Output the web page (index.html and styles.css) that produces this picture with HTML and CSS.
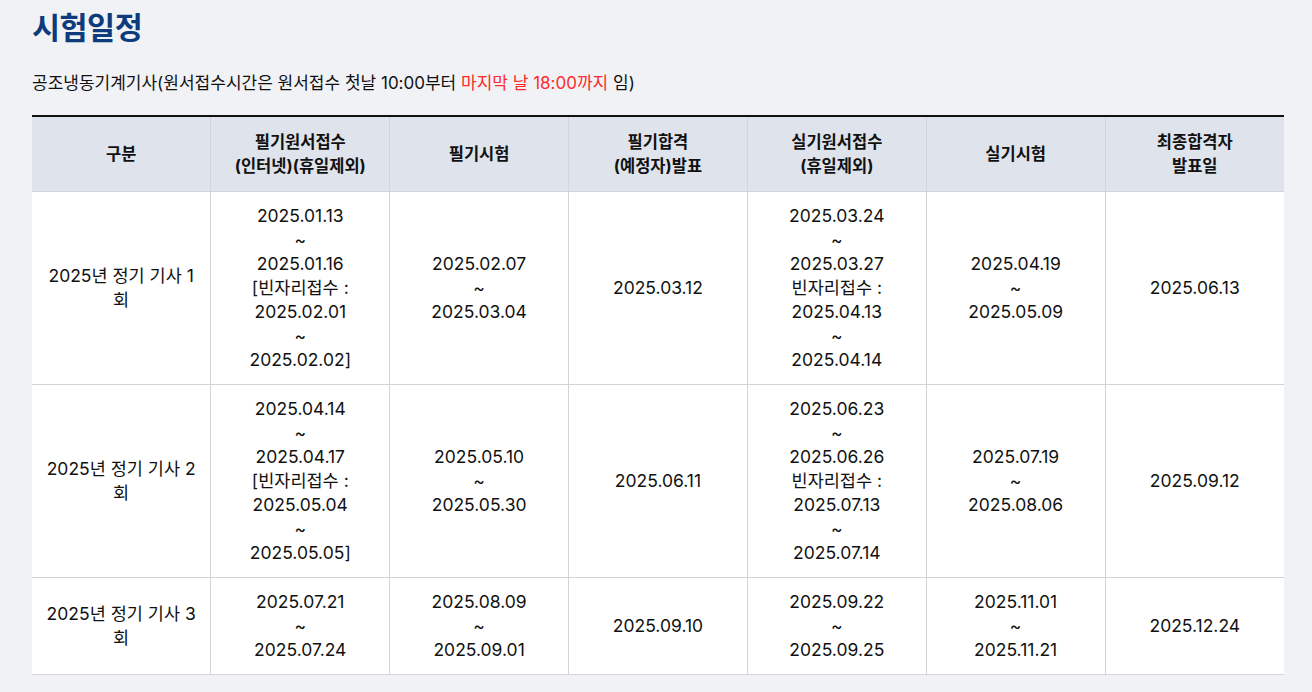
FILE: index.html
```html
<!DOCTYPE html>
<html lang="ko">
<head>
    <meta charset="UTF-8">
    <meta name="viewport" content="width=device-width, initial-scale=1.0">
    <title>시험일정</title>
    <link rel="stylesheet" href="styles.css">
</head>
<body>
    <div class="schedule-container">
        <h2 class="schedule-title">시험일정</h2>
        <p class="schedule-note">
            공조냉동기계기사(원서접수시간은 원서접수 첫날 10:00부터 <span class="note-red">마지막 날 18:00까지</span> 임)
        </p>

        <table class="schedule-table">
            <thead>
                <tr>
                    <th>구분</th>
                    <th>필기원서접수<br>(인터넷)(휴일제외)</th>
                    <th>필기시험</th>
                    <th>필기합격<br>(예정자)발표</th>
                    <th>실기원서접수<br>(휴일제외)</th>
                    <th>실기시험</th>
                    <th>최종합격자<br>발표일</th>
                </tr>
            </thead>
            <tbody>
                <tr>
                    <td>2025년 정기 기사 1<br>회</td>
                    <td>2025.01.13<br>~<br>2025.01.16<br>[빈자리접수 :<br>2025.02.01<br>~<br>2025.02.02]</td>
                    <td>2025.02.07<br>~<br>2025.03.04</td>
                    <td>2025.03.12</td>
                    <td>2025.03.24<br>~<br>2025.03.27<br>빈자리접수 :<br>2025.04.13<br>~<br>2025.04.14</td>
                    <td>2025.04.19<br>~<br>2025.05.09</td>
                    <td>2025.06.13</td>
                </tr>
                <tr>
                    <td>2025년 정기 기사 2<br>회</td>
                    <td>2025.04.14<br>~<br>2025.04.17<br>[빈자리접수 :<br>2025.05.04<br>~<br>2025.05.05]</td>
                    <td>2025.05.10<br>~<br>2025.05.30</td>
                    <td>2025.06.11</td>
                    <td>2025.06.23<br>~<br>2025.06.26<br>빈자리접수 :<br>2025.07.13<br>~<br>2025.07.14</td>
                    <td>2025.07.19<br>~<br>2025.08.06</td>
                    <td>2025.09.12</td>
                </tr>
                <tr>
                    <td>2025년 정기 기사 3<br>회</td>
                    <td>2025.07.21<br>~<br>2025.07.24</td>
                    <td>2025.08.09<br>~<br>2025.09.01</td>
                    <td>2025.09.10</td>
                    <td>2025.09.22<br>~<br>2025.09.25</td>
                    <td>2025.11.01<br>~<br>2025.11.21</td>
                    <td>2025.12.24</td>
                </tr>
            </tbody>
        </table>
    </div>
</body>
</html>
```

FILE: styles.css
```css
body {
    margin: 0;
    background-color: #f1f2f6;
    color: #111;
    font-family: Inter, "Noto Sans CJK KR", sans-serif;
}

.schedule-container {
    padding: 8px 28px 0 32px;
}

.schedule-title {
    margin: 0;
    font-size: 30.5px;
    line-height: 40px;
    font-weight: 700;
    color: #0d3b7c;
    letter-spacing: -0.5px;
}

.schedule-note {
    margin: 23px 0 20px;
    font-size: 17px;
    line-height: 24px;
    color: #111;
}

.note-red {
    color: #ff2b2b;
}

.schedule-table {
    width: 100%;
    border-collapse: collapse;
    table-layout: fixed;
    background-color: #fff;
    border-top: 2px solid #111;
}

.schedule-table th,
.schedule-table td {
    border: 1px solid #d4d4d8;
    text-align: center;
    vertical-align: middle;
}

.schedule-table tr > :first-child {
    border-left: none;
}

.schedule-table tr > :last-child {
    border-right: none;
}

.schedule-table th {
    background-color: #dfe3eb;
    font-size: 16.5px;
    font-weight: 700;
    line-height: 24px;
    padding: 13px 6px;
    border-top: none;
}

.schedule-table td {
    font-size: 17.5px;
    line-height: 24px;
    padding: 12px 6px;
}
```
